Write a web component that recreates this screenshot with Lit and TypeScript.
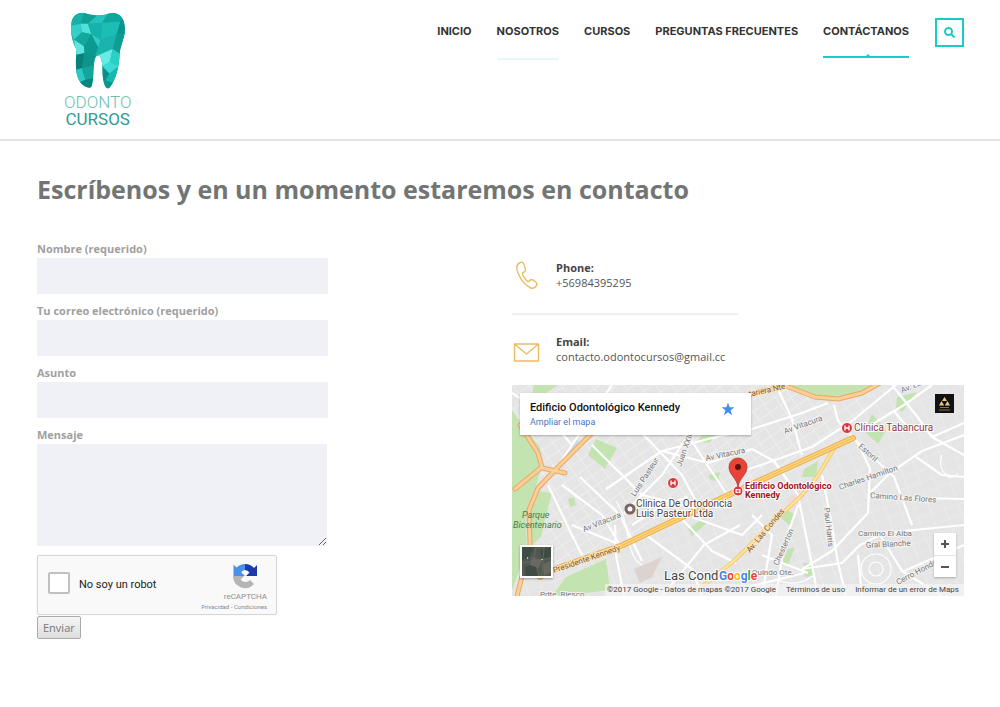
import { LitElement, html, svg, css } from "lit";
import { customElement, state } from "lit/decorators.js";
import { classMap } from "lit/directives/class-map.js";

const facets: [string, string][] = [
  ["80,34 130,34 118,72 88,80", "#19b0a8"],
  ["130,34 165,50 140,72 118,72", "#12a096"],
  ["165,50 205,34 182,70 140,72", "#23c4bb"],
  ["205,34 260,40 236,66 182,70", "#0fa69e"],
  ["236,66 260,40 260,120 226,104", "#0b948d"],
  ["182,70 236,66 226,104 178,120", "#1bbdb4"],
  ["118,72 140,72 150,104 122,98", "#52e0da"],
  ["140,72 182,70 178,120 150,104", "#16b3aa"],
  ["80,80 118,72 122,98 98,120", "#35cfc8"],
  ["98,120 122,98 150,104 128,140", "#14a79f"],
  ["80,80 98,120 106,160 80,160", "#20bcb4"],
  ["98,120 128,140 130,160 106,168", "#5fe6e0"],
  ["128,140 150,104 178,120 162,168 130,160", "#0b9a92"],
  ["150,104 178,120 172,146", "#2ccbc3"],
  ["178,120 226,104 214,148 180,168 162,168", "#19b5ac"],
  ["226,104 260,100 244,168 214,148", "#0d9d95"],
  ["100,166 130,160 122,206 98,212", "#0a8079"],
  ["130,160 162,168 156,200 122,206", "#0f948c"],
  ["98,212 122,206 132,240 110,250", "#2bc9c1"],
  ["122,206 158,196 156,236 132,240", "#12a69d"],
  ["110,250 132,240 156,236 150,270 120,270", "#0a857e"],
  ["172,166 214,148 206,186 184,200", "#66ebe5"],
  ["214,148 244,168 232,200 206,186", "#2ccfc6"],
  ["184,200 206,186 232,200 204,222", "#3bdad2"],
  ["182,200 204,222 192,244 182,240", "#0c8f87"],
  ["204,222 236,196 220,250 192,244", "#17b8ae"],
  ["182,240 220,250 204,270 186,270", "#0a968e"],
];

const minorRoads = [
  "M60 60L100 0M68 92L108 130L130 176M50 100L90 130L108 160",
  "M80 60L130 110L196 126M94 104L150 66L196 78L240 64",
  "M112 128L150 90L176 50M130 48L170 90L186 120",
  "M150 66L196 54L240 44L290 28L316 18M176 50L190 72L214 108",
  "M103 140L104 170L112 211M60 140L104 158M36 100L60 150L70 170",
  "M0 8L32 28L60 60M60 60L44 84M120 140L148 122L176 112",
  "M170 134L200 166L224 178M134 150L180 184L190 211",
  "M180 132L230 150L250 130M150 211L192 160L228 140",
  "M226 88L300 62L340 36L384 0M240 64L262 76L286 110L296 160L306 211",
  "M264 0L280 34L290 70M322 20L326 36L344 56L360 70",
  "M344 56L382 92L400 140M356 42L392 20L420 0",
  "M380 0L404 30L420 52L452 38M452 50L410 66L378 88L356 110",
  "M345 56L358 84L356 128L320 166L290 184",
  "M356 112L452 114M290 184L330 178L348 160L372 148L452 140",
  "M346 170L350 211M368 150L390 186L430 211M392 186L452 160",
  "M310 90L318 130L326 178L334 211M264 211L272 160L286 120",
  "M228 204L292 188M250 170L296 188M240 130L260 150L250 211",
  "M404 72L430 90L452 92M420 52L452 70M382 26L400 48",
];

const mapLabels: [number, number, number, string, string][] = [
  [123, 112, -57, "Luis Pasteur", "street"],
  [169, 82, -70, "Juan XXIII", "street"],
  [194, 76, -12, "Av Vitacura", "street"],
  [273, 49, -20, "Av Vitacura", "street"],
  [72, 147, -22, "Av Vitacura", "street"],
  [346, 62, 42, "Estoril", "street"],
  [328, 105, -19, "Charles Hamilton", "street"],
  [390, 8, -22, "Av. Las", "street"],
  [358, 113, 4, "Camino Las Flores", "street"],
  [346, 151, 0, "Camino El Alba", "street"],
  [354, 163, -3, "Gral Blanche", "street"],
  [312, 123, 84, "Paul Harris", "street"],
  [266, 181, -66, "Chesterton", "street"],
  [386, 200, -28, "Cerro Honda", "street"],
  [240, 190, 0, "Quindo Ote.", "street"],
  [28, 212, 0, "Pdte. Riesco", "street"],
  [238, 168, -50, "Av. Las Condes", "avenue"],
  [42, 188, -19, "Presidente Kennedy", "avenue"],
  [224, 15, -13, "Costanera Nte", "avenue"],
];

@customElement("odonto-logo")
export class OdontoLogo extends LitElement {
  static styles = css`
    :host { display: block; }
    .link { display: flex; flex-direction: column; align-items: center; text-decoration: none; color: #2f9c92; font-family: "Liberation Sans Narrow", Roboto, sans-serif; font-size: 17px; line-height: 17px; }
    .tooth { display: block; width: 60px; height: 78px; margin-bottom: 5px; }
    .top { color: #6cc0b2; font-weight: 300; }
  `;
  render() {
    return html`<a class="link" href="#inicio" aria-label="Odonto Cursos">
      <svg class="tooth" viewBox="80 34 180 234" aria-hidden="true">
        <clipPath id="outline"><path d="M90 75C90 50 110 37 130 40C150 48 180 49 200 42C228 34 248 50 250 80C254 110 235 140 235 165C233 200 225 240 203 266C190 268 186 245 184 225C184 195 180 165 170 167C158 170 157 200 156 225C154 245 154 262 145 264C125 262 106 245 104 205C103 170 106 155 106 150C95 130 87 105 90 75Z" /></clipPath>
        <g clip-path="url(#outline)">
          <rect x="80" y="34" width="180" height="240" fill="#15aba2" />
          ${facets.map(([points, fill]) => svg`<polygon points=${points} fill=${fill} />`)}
        </g>
      </svg>
      <span class="top">ODONTO</span><span>CURSOS</span>
    </a>`;
  }
}

@customElement("location-map")
export class LocationMap extends LitElement {
  static styles = css`
    :host { display: block; position: relative; height: 211px; overflow: hidden; background: #e8e8e8; font-family: Roboto, sans-serif; }
    .canvas { display: block; width: 100%; height: 100%; }
    .street { font-size: 8px; fill: #777; stroke: #f4f4f4; stroke-width: 2px; paint-order: stroke; }
    .avenue { font-size: 8px; fill: #7b5528; stroke: #fbe6c0; stroke-width: 2px; paint-order: stroke; }
    .place { font-size: 10px; fill: #4a4246; stroke: #fff; stroke-width: 2px; paint-order: stroke; }
    .clinic { fill: #8c3a42; }
    .main { fill: #a01420; font-weight: 700; font-size: 9px; }
    .park { font-size: 9px; font-style: italic; fill: #4a7b4a; }
    .city { font-size: 13px; fill: #444; stroke: #fff; stroke-width: 2px; paint-order: stroke; }
    .google { font-size: 12px; font-weight: 700; stroke: #fff; stroke-width: 2px; paint-order: stroke; }
    .card { position: absolute; left: 8px; top: 8px; width: 231px; height: 42px; box-sizing: border-box; padding: 7px 16px 7px 10px; display: flex; justify-content: space-between; align-items: flex-start; background: #fff; box-shadow: 0 1px 2px #0004; font-size: 10px; line-height: 15px; }
    .name { color: #111; font-weight: 500; font-size: 11px; }
    .expand { color: #4678c0; font-size: 9px; text-decoration: none; display: block; line-height: 14px; }
    .star { width: 14px; height: 14px; margin-top: 2px; fill: #3f8df0; }
    .avatar { position: absolute; right: 10px; top: 9px; width: 19px; height: 19px; }
    .satellite { position: absolute; left: 8px; bottom: 18px; width: 33px; height: 33px; padding: 0; border: 2px solid #fff; background: #4b5450; box-shadow: 0 1px 2px #0005; }
    .satellite svg { display: block; width: 100%; height: 100%; }
    .zoom { position: absolute; right: 8px; bottom: 19px; width: 22px; display: grid; background: #fff; box-shadow: 0 1px 2px #0004; }
    .zoom button { border: 0; padding: 0; height: 22px; background: none; display: grid; place-items: center; }
    .zoom button + button { border-top: 1px solid #e6e6e6; }
    .zoom svg { width: 10px; height: 10px; stroke: #555; stroke-width: 2; }
    .legal { position: absolute; right: 0; bottom: 0; display: flex; gap: 10px; padding: 0 5px 0 2px; background: #f5f5f5b0; color: #444; font-size: 8px; line-height: 12px; white-space: nowrap; }
    .legal a { color: inherit; text-decoration: none; }
  `;
  render() {
    return html`
      <svg class="canvas" viewBox="0 0 452 211" preserveAspectRatio="xMidYMid slice" role="img" aria-label="Mapa">
        <defs>
          <pattern id="west" width="13" height="10" patternUnits="userSpaceOnUse" patternTransform="rotate(-35)"><path d="M0 0H13M0 0V10" stroke="#f1f1f1" stroke-width="1.4" fill="none" /></pattern>
          <pattern id="east" width="14" height="11" patternUnits="userSpaceOnUse" patternTransform="rotate(-20)"><path d="M0 0H14M0 0V11" stroke="#eeeeee" stroke-width="1.2" fill="none" /></pattern>
        </defs>
        <rect width="452" height="211" fill="#e5e5e5" />
        <path d="M0 0H365L340 54L20 195H0Z" fill="url(#west)" />
        <path d="M365 0H452V211H0V195L340 54Z" fill="url(#east)" />
        <g fill="#c3e3b0">
          <path d="M0 25L10 40L28 62L30 80L22 108L14 128L15 165L0 205Z" />
          <path d="M24 106L40 108L34 130L29 152L18 162L17 130Z" />
          <path d="M22 0H46L34 8L28 24L18 18ZM84 54L105 63L93 84L76 70Z" />
          <path d="M54 192L94 174L98 205L50 211L40 211ZM272 0H362L340 10L306 12Z" />
          <path d="M385 12L405 7L390 27L384 22ZM360 29L374 45L366 59L352 46ZM194 40H210L198 58L186 56Z" />
          <path d="M292 84L306 76L304 92L290 92ZM273 123L283 130L277 140L268 132ZM276 164L283 162L276 180L270 178Z" />
          <path d="M176 144L190 134L196 137L180 151ZM56 114L62 112L64 120L58 122ZM197 90L208 87L206 96L198 95Z" />
          <path d="M291 178L301 178L303 190L293 192Z" />
        </g>
        <path d="M122 184L150 172L140 192L128 198Z" fill="#dcd2ce" />
        <path d="M274 114L288 104L290 120L280 126Z" fill="#f0dcdc" />
        <path d="M66 56L46 82L24 108" fill="none" stroke="#c9dde8" stroke-width="3" />
        <g fill="none" stroke="#fff" stroke-width="2.2" stroke-linejoin="round">${minorRoads.map((d) => svg`<path d=${d} />`)}</g>
        <g fill="none" stroke="#fff" stroke-width="1.2">
          <circle cx="364" cy="184" r="7" /><circle cx="364" cy="184" r="15" />
          <path d="M104 116C120 140 112 170 130 180M430 70C424 84 438 100 446 88M302 190C290 200 276 200 262 194" />
        </g>
        <g fill="none" stroke-linejoin="round" stroke-linecap="round">
          <path d="M8 40L26 68L30 82L3 104M84 44L46 82L26 103L17 125L18 160L5 211M30 83L53 88M222 16L250 6L274 1L303 12L326 14L350 8L368 -2" stroke="#eba766" stroke-width="5" />
          <path d="M8 40L26 68L30 82L3 104M84 44L46 82L26 103L17 125L18 160L5 211M30 83L53 88M222 16L250 6L274 1L303 12L326 14L350 8L368 -2" stroke="#fbcf96" stroke-width="3" />
          <path d="M192 200L223 175L256 142L290 110L305 92L323 62" stroke="#f3c76c" stroke-width="4" />
          <path d="M192 200L223 175L256 142L290 110L305 92L323 62" stroke="#fde29b" stroke-width="2.4" />
          <path d="M28 192L43 184L111 160L170 132L223 107L251 94L341 53" stroke="#eeb04e" stroke-width="6" />
          <path d="M28 192L43 184L111 160L170 132L223 107L251 94L341 53" stroke="#fdd67c" stroke-width="3.6" />
          <path d="M28 192L43 184L111 160L170 132L223 107L251 94L341 53" stroke="#efb050" stroke-width=".8" />
        </g>
        ${mapLabels.map(([x, y, r, text, kind]) => svg`<text class=${kind} transform="translate(${x} ${y}) rotate(${r})">${text}</text>`)}
        <text class="park" x="10" y="133">Parque</text><text class="park" x="1" y="143">Bicentenario</text>
        <text class="place" x="124" y="122">Clinica De Ortodoncia</text><text class="place" x="124" y="132">Luis Pasteur Ltda</text>
        <circle cx="118" cy="124" r="4" fill="#fff" stroke="#7c6560" stroke-width="3" />
        <text class="place clinic" x="342" y="46">Clínica Tabancura</text>
        <g fill="none" stroke="#fff"><circle cx="335" cy="43" r="5.5" fill="#d9363c" /><path d="M333 40.5V45.5M337 40.5V45.5M333 43H337" stroke-width="1.3" /></g>
        <g fill="none" stroke="#fff"><circle cx="161" cy="98" r="5.5" fill="#d9363c" /><path d="M159 95.500V100.500M163 95.500V100.500M159 98H163" stroke-width="1.3" /></g>
        <circle cx="226" cy="106" r="5" fill="#d9363c" stroke="#fff" /><rect x="223.500" y="104" width="5" height="4" fill="#fff" /><path d="M226 104.500V107.500M224.500 106H227.500" stroke="#d9363c" />
        <path d="M226 102C225 93 217 90 217 82A9 9 0 0 1 235 82C235 90 227 93 226 102Z" fill="#ea4335" stroke="#b5322a" stroke-width=".8" /><circle cx="226" cy="82" r="3" fill="#5b1210" />
        <text class="place main" x="233" y="104">Edificio Odontológico</text><text class="place main" x="233" y="113">Kennedy</text>
        <text class="city" x="152" y="195">Las Condes</text>
        <text class="google" x="207" y="195"><tspan fill="#4285f4">G</tspan><tspan fill="#ea4335">o</tspan><tspan fill="#fbbc05">o</tspan><tspan fill="#4285f4">g</tspan><tspan fill="#34a853">l</tspan><tspan fill="#ea4335">e</tspan></text>
      </svg>
      <div class="card">
        <div><div class="name">Edificio Odontológico Kennedy</div><a class="expand" href="#mapa">Ampliar el mapa</a></div>
        <svg class="star" viewBox="0 0 24 24" aria-hidden="true"><path d="M12 1l2.800 8H23l-6.600 5 2.500 8.500L12 17.500 5.100 22.500 7.600 14 1 9h8.200z" /></svg>
      </div>
      <svg class="avatar" viewBox="0 0 19 19" aria-hidden="true"><rect width="19" height="19" fill="#111" /><path d="M9.500 3L12 7H7ZM6.500 7L9.200 11.500H4ZM12.500 7L15 11.500H9.800Z" fill="#e6c98a" /><path d="M5 13.500H14M4 16H15" stroke="#8a7340" /></svg>
      <button class="satellite" aria-label="Satélite"><svg viewBox="0 0 29 29"><rect width="29" height="29" fill="#50584f" /><path d="M0 0H12L8 9L0 13ZM18 3L29 0V10L20 12ZM3 20L13 16L16 29H4Z" fill="#3f4c46" /><path d="M10 10L20 13L17 21L8 18ZM21 17L29 14V25L22 29Z" fill="#68685f" /><path d="M14 0L12 10L17 29M0 16L29 11M22 0L20 29" stroke="#6d6f68" stroke-width=".7" fill="none" /><path d="M5 10h1v2H5zM19 12h2v1h-2z" fill="#b5bab6" /></svg></button>
      <div class="zoom">
        <button aria-label="Acercar"><svg viewBox="0 0 10 10"><path d="M5 1V9M1 5H9" /></svg></button>
        <button aria-label="Alejar"><svg viewBox="0 0 10 10"><path d="M1 5H9" /></svg></button>
      </div>
      <div class="legal"><span>©2017 Google - Datos de mapas ©2017 Google</span><a href="#terminos">Términos de uso</a><a href="#error">Informar de un error de Maps</a></div>
    `;
  }
}

@customElement("contact-form")
export class ContactForm extends LitElement {
  static styles = css`
    :host { display: block; }
    .form { display: grid; justify-items: start; color: #a0a0a0; font-size: 11px; }
    .label { font-weight: 700; line-height: 14px; margin-bottom: 2px; }
    .field { box-sizing: border-box; width: 100%; max-width: 291px; height: 36px; margin: 0 0 10px; padding: 8px; border: 0; background: #eff1f6; color: #666; font: inherit; }
    .message { max-width: 290px; height: 102px; margin-bottom: 9px; resize: both; }
    .captcha { box-sizing: border-box; width: 240px; max-width: 100%; height: 60px; display: flex; align-items: center; padding: 0 9px 0 10px; border: 1px solid #d6d6d6; border-radius: 2px; background: #f9f9f9; box-shadow: 0 0 2px #0001; font-family: Roboto, sans-serif; }
    .check { appearance: none; width: 22px; height: 22px; margin: 0 9px 4px 0; border: 2px solid #c1c1c1; border-radius: 2px; background: #fff; }
    .check:checked { background: #4a90e2; }
    .robot { flex: 1; margin-bottom: 2px; color: #222; }
    .brand { display: grid; justify-items: end; color: #909090; font-size: 8px; line-height: 11px; }
    .mark { width: 26px; height: 26px; margin: 4px 9px 2px 0; }
    .terms { font-size: 6px; line-height: 10px; color: #888; }
    .terms a { color: inherit; text-decoration: none; }
    .send { height: 23px; margin-top: 1px; padding: 0 5px; border: 1px solid #aaa; border-radius: 2px; background: linear-gradient(#f6f6f6, #dedede); color: #777; font: inherit; line-height: 16px; }
  `;
  render() {
    return html`<form class="form" @submit=${(e: Event) => e.preventDefault()}>
      <label class="label" for="nombre">Nombre (requerido)</label><input class="field" id="nombre" type="text" />
      <label class="label" for="correo">Tu correo electrónico (requerido)</label><input class="field" id="correo" type="email" />
      <label class="label" for="asunto">Asunto</label><input class="field" id="asunto" type="text" />
      <label class="label" for="mensaje">Mensaje</label><textarea class="field message" id="mensaje"></textarea>
      <div class="captcha">
        <input class="check" id="robot" type="checkbox" /><label class="robot" for="robot">No soy un robot</label>
        <div class="brand">
          <svg class="mark" viewBox="0 0 26 26" aria-hidden="true">
            <path d="M1 13A12 12 0 0 0 22 21L18 17A6 6 0 0 1 8.500 16.500L12 13Z" fill="#b5b5b5" />
            <path d="M13 1A12 12 0 0 0 4.500 4.500L1.500 1.500V13H13L9.200 9.200A6 6 0 0 1 13 7Z" fill="#4a90e8" />
            <path d="M13 1A12 12 0 0 1 22 5L25 2V13H14L17.500 9.500A6 6 0 0 0 13 7Z" fill="#1c3aa9" />
          </svg>
          <span>reCAPTCHA</span>
          <span class="terms"><a href="#privacidad">Privacidad</a> - <a href="#condiciones">Condiciones</a></span>
        </div>
      </div>
      <button class="send" type="submit">Enviar</button>
    </form>`;
  }
}

@customElement("app-root")
export class AppRoot extends LitElement {
  static styles = css`
    :host { display: block; min-height: 100vh; background: #fff; color: #555; font-family: "Open Sans", "Noto Sans", sans-serif; font-size: 11px; line-height: 15px; }
    .header { display: flex; justify-content: space-between; align-items: flex-start; box-sizing: border-box; min-height: 141px; padding: 11px 36px 8px 64px; border-bottom: 2px solid #e2e2e2; }
    .nav { display: flex; align-items: flex-start; gap: 25px; padding-top: 7px; }
    .item { position: relative; height: 40px; box-sizing: border-box; padding-top: 6px; border-bottom: 2px solid transparent; color: #333; font: 700 11px/15px Inter, sans-serif; text-decoration: none; white-space: nowrap; }
    .faded { height: 42px; border-color: #e3f8f6; }
    .active { border-color: #1bccc6; }
    .active::before { content: ""; position: absolute; left: 50%; bottom: 0; border: 2px solid transparent; border-bottom-color: #1bccc6; border-top: 0; }
    .search { width: 29px; height: 29px; margin-left: 1px; padding: 0; display: grid; place-items: center; border: 2px solid #1bccc6; background: #fff; }
    .search svg { width: 11px; height: 11px; fill: none; stroke: #1bccc6; stroke-width: 2; }
    .main { padding: 30px 36px 40px 37px; }
    .title { margin: 0 0 35px; color: #727573; font-size: 25px; line-height: 36px; font-weight: 700; }
    .columns { display: grid; grid-template-columns: minmax(0, 1fr) minmax(0, 1fr); gap: 23px; align-items: start; }
    .info { padding-top: 18px; }
    .row { display: flex; align-items: center; gap: 15px; }
    .row svg { width: 29px; height: 30px; fill: none; stroke: #e9bd62; stroke-width: 1.400; stroke-linejoin: round; }
    .row strong { display: block; color: #444; }
    .row a { color: inherit; text-decoration: none; }
    .rule { width: 50%; margin: 23px 0 19px; border: 0; border-top: 2px solid #f0f0f0; }
    .map { margin-top: 21px; }
  `;

  @state() private current = "CONTÁCTANOS";

  private items = ["INICIO", "NOSOTROS", "CURSOS", "PREGUNTAS FRECUENTES", "CONTÁCTANOS"];

  render() {
    return html`
      <header class="header">
        <odonto-logo></odonto-logo>
        <nav class="nav">
          ${this.items.map((name) => html`<a href="#${name.toLowerCase()}" class=${classMap({ item: true, faded: name === "NOSOTROS", active: name === this.current })} @click=${() => (this.current = name)}>${name}</a>`)}
          <button class="search" aria-label="Buscar"><svg viewBox="0 0 11 11"><circle cx="4.500" cy="4.500" r="3.500" /><path d="M7 7L10.500 10.500" /></svg></button>
        </nav>
      </header>
      <main class="main">
        <h1 class="title">Escríbenos y en un momento estaremos en contacto</h1>
        <div class="columns">
          <contact-form></contact-form>
          <section class="info">
            <div class="row">
              <svg viewBox="0 0 29 30" aria-hidden="true"><path d="M8 2.500C5 4 4 8 6 13C9 20 14 26 19 28C22 29 25 26 25 24C25 22.500 21 19.500 19.500 19.500C18 19.500 17.500 22 16 21.500C14 20.500 10.500 15.500 10.500 13.500C10.500 12 13.500 12 13.500 10.500C13.500 9 12 3 10.500 2.300C9.500 2 9 2 8 2.500Z" /></svg>
              <div><strong>Phone:</strong><a href="tel:+56984395295">+56984395295</a></div>
            </div>
            <hr class="rule" />
            <div class="row">
              <svg viewBox="0 0 29 30" aria-hidden="true"><path d="M2.500 10H26.500V27H2.500ZM2.500 10L14.500 20L26.500 10" /></svg>
              <div><strong>Email:</strong><a href="mailto:contacto.odontocursos@gmail.cc">contacto.odontocursos@gmail.cc</a></div>
            </div>
            <location-map class="map"></location-map>
          </section>
        </div>
      </main>
    `;
  }
}
